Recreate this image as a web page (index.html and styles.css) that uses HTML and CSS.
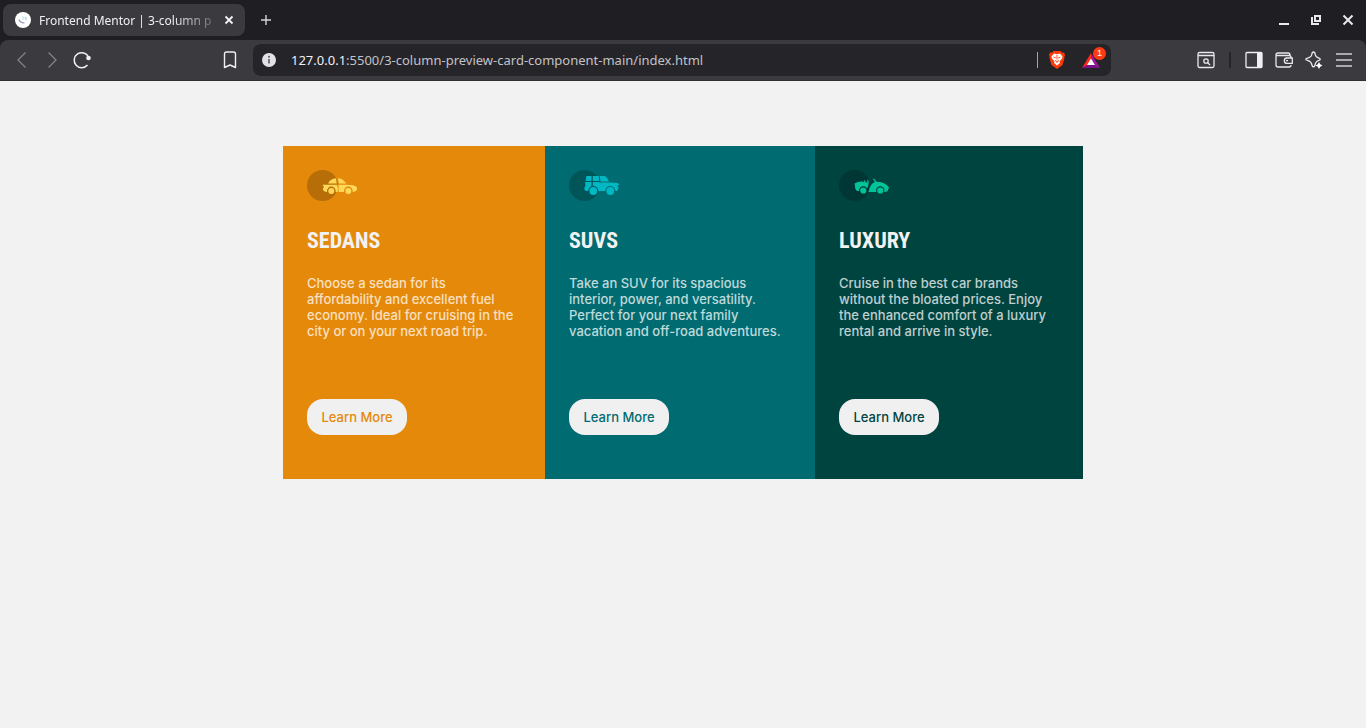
FILE: index.html
```html
<!DOCTYPE html>
<html lang="en">
<head>
<meta charset="utf-8">
<meta name="viewport" content="width=device-width, initial-scale=1">
<title>Frontend Mentor | 3-column preview card component</title>
<link rel="stylesheet" href="styles.css">
</head>
<body>
<header class="browser">
  <div class="tabs">
    <div class="tab">
      <svg class="favicon" width="16" height="16" viewBox="0 0 16 16"><circle cx="8" cy="8" r="8" fill="#fff"/><path d="M4 7.500Q5 11 9.500 10.800" fill="none" stroke="#9b97c6" stroke-width="1.200"/><path d="M8 4.500v3M11 5v3.500M9.500 6.500l2-1" fill="none" stroke="#a8dde6" stroke-width="1.100"/></svg>
      <span class="tab-title">Frontend Mentor | 3-column p</span>
      <button class="plain close-tab" aria-label="Close tab"><svg width="10" height="10" viewBox="0 0 10 10"><path d="M1.500 1.500l7 7M8.500 1.500l-7 7" stroke="#f3f2f6" stroke-width="1.800"/></svg></button>
    </div>
    <button class="plain new-tab" aria-label="New tab"><svg width="12" height="12" viewBox="0 0 12 12"><path d="M6 1v10M1 6h10" stroke="#d5d4d9" stroke-width="1.400"/></svg></button>
    <div class="window-buttons">
      <button class="plain" aria-label="Minimize"><svg width="12" height="12" viewBox="0 0 12 12"><path d="M1 10h10" stroke="#e9e8ee" stroke-width="2"/></svg></button>
      <button class="plain" aria-label="Restore"><svg width="12" height="12" viewBox="0 0 12 12"><path d="M5 2h5v5H5zM2 3v7h7" fill="none" stroke="#e9e8ee" stroke-width="2"/></svg></button>
      <button class="plain" aria-label="Close"><svg width="12" height="12" viewBox="0 0 12 12"><path d="M1.500 1.500l9 9M10.500 1.500l-9 9" stroke="#e9e8ee" stroke-width="2"/></svg></button>
    </div>
  </div>
  <div class="toolbar">
    <div class="nav">
      <button class="plain" aria-label="Back"><svg width="18" height="18" viewBox="0 0 18 18"><path d="M12.500 1.500L5 9l7.500 7.500" fill="none" stroke="#838287" stroke-width="1.300"/></svg></button>
      <button class="plain" aria-label="Forward"><svg width="18" height="18" viewBox="0 0 18 18"><path d="M5.500 1.500L13 9l-7.500 7.500" fill="none" stroke="#838287" stroke-width="1.300"/></svg></button>
      <button class="plain" aria-label="Reload"><svg width="18" height="18" viewBox="0 0 18 18"><path d="M14.500 14A7.500 7.500 0 1 1 15.500 6" fill="none" stroke="#f0eff4" stroke-width="1.500"/><circle cx="15.500" cy="7" r="2.300" fill="#f0eff4"/></svg></button>
    </div>
    <button class="plain bookmark" aria-label="Bookmark"><svg width="14" height="18" viewBox="0 0 14 18"><path d="M1.500 3q0-2 2-2h7q2 0 2 2v13.500L7 14l-5.500 2.500z" fill="none" stroke="#f0eff4" stroke-width="1.400" stroke-linejoin="round"/></svg></button>
    <div class="address">
      <svg width="14" height="14" viewBox="0 0 14 14"><circle cx="7" cy="7" r="7" fill="#e2e1e8"/><path d="M7 6v4.500" fill="none" stroke="#58575c" stroke-width="1.600"/><circle cx="7" cy="3.800" r="1" fill="#58575c"/></svg>
      <div class="url"><span class="host">127.0.0.1</span>:5500/3-column-preview-card-component-main/index.html</div>
      <span class="divider"></span>
      <button class="plain shield" aria-label="Shields"><svg width="16" height="18" viewBox="0 0 16 18"><path d="M4.500 0h7L13 1.800l2-.3 1 2.500-.7 1.700.2 1.300-2 7L8 18l-5.500-4-2-7 .2-1.300L0 4l1-2.500 2 .3z" fill="#ff3a0a"/><path d="M5 2.500l3 .7 3-.7 2.500 3-.5 2-2.500 3 .5 1.500L8 14.500 5 12l.5-1.500L3 7.500l-.5-2z" fill="#fff"/><path d="M4.500 6l2.300 1M11.500 6l-2.300 1M8 4v4.500M6 9.500l2 1 2-1M8 10.500v1.500" fill="none" stroke="#ff3a0a" stroke-width=".9"/></svg></button>
      <button class="plain rewards" aria-label="Rewards"><svg width="24" height="18" viewBox="0 0 24 18"><path d="M9 2L0 17l5-2 4-7z" fill="#ff291c"/><path d="M9 2l9 15-5-2-4-7z" fill="#a01599"/><path d="M0 17h18l-5-3H5z" fill="#79108c"/><path d="M9 7.500l4 6.500H5z" fill="#fff"/></svg><span class="badge">1</span></button>
    </div>
    <div class="tools">
      <button class="plain" aria-label="Search tabs"><svg width="18" height="18" viewBox="0 0 18 18"><rect x="1" y="1.500" width="16" height="15" rx="1.500" fill="none" stroke="#e9e8ee" stroke-width="1.300"/><path d="M1 4.500h16M10.500 11.500l2.500 2.500" stroke="#e9e8ee" stroke-width="1.300"/><circle cx="9" cy="10" r="2.200" fill="none" stroke="#e9e8ee" stroke-width="1.300"/></svg></button>
      <span class="tool-divider"></span>
      <button class="plain" aria-label="Sidebar"><svg width="18" height="18" viewBox="0 0 18 18"><rect x="1" y="1.500" width="16" height="15" rx="1" fill="none" stroke="#f0eff4" stroke-width="1.300"/><path d="M12 1.500h5v15h-5z" fill="#f0eff4"/></svg></button>
      <button class="plain" aria-label="Wallet"><svg width="18" height="18" viewBox="0 0 18 18"><path d="M15 4.500V4q0-2-2-2H3Q1 2 1 4v10q0 2 2 2h11q2 0 2-2M1 4.500h13q2 0 2 2V7" fill="none" stroke="#e9e8ee" stroke-width="1.300"/><path d="M17.300 7H12a2.700 2.700 0 0 0 0 5.400h5.300zM11 9.700h2" fill="none" stroke="#e9e8ee" stroke-width="1.300"/></svg></button>
      <button class="plain" aria-label="Assistant"><svg width="18" height="18" viewBox="0 0 18 18"><path d="M8.500 1Q10 1 10.200 3.500 10.500 6 14 7.200q2.500 1 0 2.200-3.500 1-4 5-1.500 3-3 0Q6.500 10.500 2.500 9.400q-3.500-1.200 0-2.300Q6.500 6 6.800 3.500 7 1 8.500 1z" fill="none" stroke="#e9e8ee" stroke-width="1.300"/><path d="M14 11l1.200 2.300 2.300 1.200-2.300 1.200L14 18l-1.200-2.300-2.300-1.200 2.300-1.200z" fill="#fff"/></svg></button>
      <button class="plain" aria-label="Menu"><svg width="18" height="18" viewBox="0 0 18 18"><path d="M1 3h16M1 9h16M1 15h16" stroke="#d0cfd4" stroke-width="1.500"/></svg></button>
    </div>
  </div>
</header>
<main class="cards">
  <section class="card sedans">
    <svg class="car" width="51" height="31" viewBox="0 0 51 31"><mask id="wheels"><path fill="#fff" d="M0 0h51v31H0z"/><circle cx="24.300" cy="21" r="4.400"/><circle cx="41.300" cy="21" r="4.400"/></mask><circle cx="15.500" cy="15.500" r="15.500" fill="#000" opacity=".2"/><g fill="#ffd858"><path d="M21 13.500Q23.500 8.500 29 8.300l.8 5.200zM31 8.300q3.500 0 5 1.700l3.500 3.500H31.800z"/><path mask="url(#wheels)" d="M15.500 14.800h14.700l.8 3.500-.5 3.700H19L17 21q-1.500-1-1-2.500l1-1.500zM31.500 14.800H40q7 .3 9.500 1.800 1 2-.3 4.400l-3.200 1H31.600z"/><circle cx="24.300" cy="21" r="3"/><circle cx="41.300" cy="21" r="3"/></g></svg>
    <h2>SEDANS</h2>
    <p>Choose a sedan for its<br>affordability and excellent fuel<br>economy. Ideal for cruising in the<br>city or on your next road trip.</p>
    <button class="learn">Learn More</button>
  </section>
  <section class="card suvs">
    <svg class="car" width="51" height="31" viewBox="0 0 51 31"><mask id="suv-wheels"><path fill="#fff" d="M0 0h51v31H0z"/><circle cx="24.300" cy="21" r="5"/><circle cx="41.300" cy="21" r="5"/></mask><circle cx="15.500" cy="15.500" r="15.500" fill="#000" opacity=".2"/><g fill="#00b8c4"><path d="M17.500 6h5v5H16.500zM23.800 6h5.700l.8 5h-6.500zM30.800 6H35q2 0 3 2l2 3.500h-8.500z"/><path mask="url(#suv-wheels)" d="M16 12h6.500v4.500H23.800V12h6.700l1 1.500V21H17l-1.500-1v-3l1-1zM31.500 12.500H40l8.500.5q1.500.5 1.500 2l-1.500.8v1l1 .5q0 3-2 3.700H31.500z"/><circle cx="24.300" cy="21" r="3.900"/><circle cx="41.300" cy="21" r="3.900"/></g></svg>
    <h2>SUVS</h2>
    <p>Take an SUV for its spacious<br>interior, power, and versatility.<br>Perfect for your next family<br>vacation and off-road adventures.</p>
    <button class="learn">Learn More</button>
  </section>
  <section class="card luxury">
    <svg class="car" width="51" height="31" viewBox="0 0 51 31"><mask id="roadster-wheels"><path fill="#fff" d="M0 0h51v31H0z"/><circle cx="24.300" cy="20.500" r="4.200"/><circle cx="41.300" cy="20.500" r="4.200"/></mask><circle cx="15.500" cy="15.500" r="15.500" fill="#000" opacity=".2"/><g fill="#00c39a"><path mask="url(#roadster-wheels)" d="M15.500 13.500q4-2.500 8-2l2 .8-.8-2.300q1.800-.2 2.300 2.500h1.300q.2-2-.3-2.700 2-.2 1.800 2.700-.3 4-2 7l-3 1.500H18q-2.500-2-2-5zM33.500 8.500q3 .5 4 3.200 8.500 0 12.500 5.800l-1.500 3.700-2.500.8H29.500q1-6 4.500-9l2-1z"/><circle cx="24.300" cy="20.500" r="3.100"/><circle cx="41.300" cy="20.500" r="3.100"/></g></svg>
    <h2>LUXURY</h2>
    <p>Cruise in the best car brands<br>without the bloated prices. Enjoy<br>the enhanced comfort of a luxury<br>rental and arrive in style.</p>
    <button class="learn">Learn More</button>
  </section>
</main>
</body>
</html>
```
FILE: styles.css
```css
* { box-sizing: border-box; }
body { margin: 0; min-height: 100vh; background: #f2f2f2; font-family: Inter, sans-serif; }
svg { display: block; flex: none; }
.plain { border: 0; padding: 0; background: none; cursor: pointer; flex: none; position: relative; }
.browser { background: #1f1e23; font-family: "Noto Sans", sans-serif; }
.tabs { display: flex; align-items: center; height: 40px; padding: 0 12px 0 3px; }
.tab { display: flex; align-items: center; width: 242px; height: 32px; padding: 0 11px 0 12px; border-radius: 8px; background: #3b3a3f; }
.tab-title { flex: 1; margin: 0 8px; white-space: nowrap; font-size: 12px; color: #f0eff4; mask-image: linear-gradient(to right, #000 75%, rgba(0, 0, 0, .2)); }
.new-tab { margin-left: 15px; }
.window-buttons { display: flex; gap: 20px; margin-left: auto; }
.toolbar { display: flex; align-items: center; height: 41px; padding: 0 13px; background: #3b3a3f; border-bottom: 1px solid #302f34; border-radius: 8px 8px 0 0; }
.nav { display: flex; gap: 12px; }
.bookmark { margin-left: 132px; }
.address { display: flex; align-items: center; flex: 1; height: 32px; margin: 0 86px 0 16px; padding: 0 5px 0 9px; border-radius: 8px; background: #252429; }
.url { flex: 1; margin-left: 15px; white-space: nowrap; font-size: 13px; color: #c3c2c8; }
.host { color: #f0eff4; }
.divider { width: 1px; height: 16px; background: #a5a4aa; }
.shield { margin-left: 11px; }
.rewards { margin-left: 17px; }
.badge { position: absolute; top: -4px; right: 0; width: 13px; height: 13px; border-radius: 50%; background: #ff3b16; color: #fff; font-size: 9px; line-height: 13px; text-align: center; }
.tools { display: flex; align-items: center; gap: 12px; }
.tool-divider { width: 2px; height: 16px; margin: 0 2px; background: #252429; }
.cards { display: grid; grid-template-columns: 262fr 270fr 268fr; width: 100%; max-width: 800px; margin: 65px auto 0; }
.card { padding: 24px 24px 44px; }
.card h2 { margin: 24px 0 18px; font: bold 22px/32px "Roboto Condensed", Roboto, sans-serif; color: #f2f2f2; }
.card p { margin: 0 0 60px; font-size: 13px; line-height: 16px; font-weight: 500; white-space: nowrap; color: rgba(255, 255, 255, .75); }
.learn { display: block; width: 100px; height: 36px; padding: 0; border: 0; border-radius: 16px; background: #f0f0f0; font: 500 13px Inter, sans-serif; cursor: pointer; }
.sedans { background: #e5890a; }
.sedans .learn { color: #e5890a; }
.suvs { background: #006b70; }
.suvs .learn { color: #006b70; }
.luxury { background: #004440; }
.luxury .learn { color: #004440; }
```
